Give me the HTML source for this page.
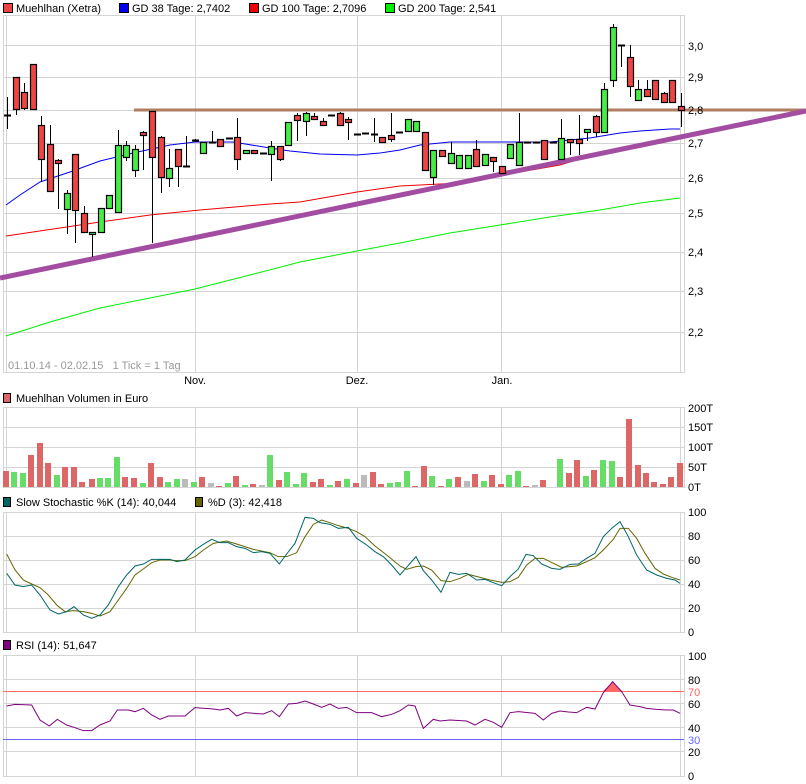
<!DOCTYPE html>
<html><head><meta charset="utf-8">
<style>
html,body{margin:0;padding:0;background:#fff;}
svg{display:block;font-family:"Liberation Sans",sans-serif;font-size:11px;}
</style></head>
<body>
<svg id="s" width="806" height="784" viewBox="0 0 806 784" xmlns="http://www.w3.org/2000/svg">
<g id="grid" stroke="#d4d4d4" stroke-width="1" fill="none"></g>
<g id="vol"></g>
<g id="lines" fill="none"></g>
<g id="candles"></g>
<g id="txt" fill="#000">
<rect x="3.5" y="3.5" width="9" height="9" fill="#ee4444" stroke="#000"/>
<text x="16" y="12">Muehlhan (Xetra)</text>
<rect x="119.5" y="3.5" width="9" height="9" fill="#0000ee" stroke="#000"/>
<text x="132" y="12">GD 38 Tage: 2,7402</text>
<rect x="249.5" y="3.5" width="9" height="9" fill="#ee0000" stroke="#000"/>
<text x="262" y="12">GD 100 Tage: 2,7096</text>
<rect x="385.5" y="3.5" width="9" height="9" fill="#00ee00" stroke="#000"/>
<text x="398" y="12">GD 200 Tage: 2,541</text>
<text x="8" y="369" fill="#999">01.10.14 - 02.02.15&#160;&#160; 1 Tick = 1 Tag</text>
<text x="195" y="384" text-anchor="middle">Nov.</text>
<text x="357" y="384" text-anchor="middle">Dez.</text>
<text x="502" y="384" text-anchor="middle">Jan.</text>
<rect x="3.5" y="393.5" width="7" height="9" fill="#dd6666" stroke="#000"/>
<text x="16" y="402">Muehlhan Volumen in Euro</text>
<rect x="3.5" y="497.5" width="7" height="9" fill="#006666" stroke="#000"/>
<text x="16" y="506">Slow Stochastic %K (14): 40,044</text>
<rect x="195.5" y="497.5" width="7" height="9" fill="#666600" stroke="#000"/>
<text x="208" y="506">%D (3): 42,418</text>
<rect x="3.5" y="640.5" width="7" height="9" fill="#800080" stroke="#000"/>
<text x="16" y="649">RSI (14): 51,647</text>
</g>
<g id="ylab" fill="#000"></g>
</svg>
<script>
var NS="http://www.w3.org/2000/svg";
function el(p,t,a){var e=document.createElementNS(NS,t);for(var k in a)e.setAttribute(k,a[k]);document.getElementById(p).appendChild(e);return e;}
function ln(p,x1,y1,x2,y2,c,w){el(p,"line",{x1:x1,y1:y1,x2:x2,y2:y2,stroke:c,"stroke-width":w||1});}
function txt(x,y,s,c){var e=el("ylab","text",{x:x,y:y});e.textContent=s;if(c)e.setAttribute("fill",c);}
var panels=[[15,372,[45,77,110,143,178,213,252,291,332]],[407,487,[427,447,467]],[512,632,[536,560,584,608]],[655,776,[679,703,727,751]]];
panels.forEach(function(p){
 el("grid","rect",{x:3.5,y:p[0]+.5,width:681,height:p[1]-p[0]});
 ln("grid",6.5,p[0],6.5,p[1],"#d4d4d4");ln("grid",680.5,p[0],680.5,p[1],"#d4d4d4");
 [195,357,501].forEach(function(x){ln("grid",x+.5,p[0],x+.5,p[1],"#d4d4d4");});
 p[2].forEach(function(y){ln("grid",3,y+.5,684,y+.5,"#d4d4d4");});
});
[["3,0",46],["2,9",77],["2,8",110],["2,7",143],["2,6",178],["2,5",213],["2,4",252],["2,3",291],["2,2",332],
 ["200T",408],["150T",427],["100T",447],["50T",467],["0T",487],
 ["100",512],["80",536],["60",560],["40",584],["20",608],["0",632],
 ["100",656],["80",680],["60",704],["40",728],["20",752],["0",776]].forEach(function(a){txt(688,a[1]+4,a[0]);});
txt(688,696,"70","#ff6666");txt(688,744,"30","#6666ff");
var V=[[11,'r',423],[28,'g',426],[44,'g',429],[60,'r',375],[77,'r',339],[94,'r',399],[110,'g',435],[127,'r',411],[143,'r',411],[160,'r',456],[178,'r',447],[194,'g',444],[211,'g',444],[227,'g',381],[244,'r',441],[261,'r',444],[278,'g',459],[294,'r',399],[311,'r',441],[327,'g',456],[344,'g',447],[360,'n',447],[377,'g',456],[393,'r',441],[410,'n',459],[426,'r',468],[443,'g',459],[459,'r',438],[476,'g',465],[492,'r',462],[509,'n',465],[526,'g',375],[542,'r',450],[559,'g',426],[575,'g',462],[592,'g',429],[609,'r',456],[625,'r',447],[642,'g',465],[658,'r',453],[675,'g',447],[692,'r',459],[708,'n',435],[725,'r',426],[741,'r',462],[758,'g',459],[775,'g',456],[791,'g',423],[808,'r',468],[824,'r',408],[841,'g',438],[858,'r',468],[874,'g',447],[891,'r',441],[908,'n',453],[924,'r',432],[941,'g',453],[957,'r',435],[974,'r',462],[990,'g',435],[1007,'g',423],[1024,'r',468],[1040,'n',465],[1057,'r',450],[1090,'g',387],[1107,'r',429],[1123,'r',390],[1140,'g',438],[1156,'r',420],[1173,'g',390],[1190,'g',393],[1206,'r',441],[1223,'r',267],[1240,'r',405],[1256,'r',429],[1273,'r',456],[1290,'r',462],[1306,'r',441],[1323,'r',399]];
var vc={r:"#dd6666",g:"#66dd66",n:"#bbbbbb"};
V.forEach(function(v){var x=Math.round(v[0]/1.945),y=Math.round(330+v[2]/3);el("vol","rect",{x:x-3,y:y,width:6,height:487-y,fill:vc[v[1]]});});
function poly(pts,c,w){el("lines","polyline",{points:pts.map(function(p){return p[0]+","+p[1];}).join(" "),stroke:c,"stroke-width":w});}
poly([[6,336],[50,322],[100,308],[150,298],[195,289],[250,275],[300,262],[357,251],[400,243],[450,233],[500,225],[550,217],[600,210],[640,203],[680,198]],"#00ee00",1);
poly([[6,236],[60,228],[100,222],[150,215],[200,210],[270,204],[300,202],[357,192],[400,186],[460,183],[490,178],[520,172],[560,165],[590,156],[610,151]],"#ee0000",1);
poly([[6,205],[20,195],[40,182],[70,172],[100,161],[133,153],[170,145],[195,142],[233,142],[270,148],[290,151],[320,154],[357,155],[380,153],[400,150],[420,145],[450,142],[500,142],[550,142],[590,138],[620,133],[640,131],[670,129],[680,129]],"#0000ee",1);
var C=[['d',115,115,97,129],['r',77,109,77,115],['r',92,108,83,110],['r',64,109,64,109],['r',125,159,116,182],['r',144,191,125,191],['r',160,163,159,209],['g',193,209,190,234],['r',154,210,154,243],['r',213,232,206,232],['g',232,234,232,257],['g',208,232,208,232],['g',195,208,195,208],['g',145,212,130,212],['g',145,157,141,161],['g',149,170,145,177],['r',132,135,131,170],['r',111,157,111,243],['r',137,177,136,193],['g',168,178,149,187],['r',149,166,149,187],['d',166,166,136,166],['d',140,140,139,142],['g',142,153,142,153],['d',142,142,131,143],['r',139,146,139,146],['d',138,138,138,138],['r',137,159,118,170],['g',150,153,150,154],['r',150,153,150,153],['d',153,153,153,153],['g',146,154,141,181],['r',146,159,146,161],['g',122,145,122,145],['r',115,120,113,141],['g',113,121,112,136],['r',116,119,113,120],['r',121,125,118,125],['d',115,115,115,115],['r',113,125,112,125],['r',119,122,117,140],['d',134,134,134,134],['d',133,133,133,133],['d',134,134,118,142],['r',137,142,137,142],['r',135,139,113,142],['d',132,132,132,132],['g',119,131,119,131],['g',121,131,121,131],['r',132,170,132,170],['g',150,177,150,185],['r',150,156,150,156],['g',153,163,142,163],['g',155,168,155,168],['g',155,168,155,168],['r',149,166,140,166],['g',154,165,154,165],['r',157,161,157,172],['r',166,173,166,173],['g',144,158,144,158],['g',142,165,113,165],['d',142,142,142,142],['d',142,142,142,142],['r',140,159,140,159],['d',142,142,142,142],['g',138,159,119,159],['r',139,142,139,155],['r',139,143,115,155],['g',129,132,129,141],['r',116,132,115,137],['g',89,132,83,132],['g',27,80,24,87],['d',45,45,45,67],['r',57,86,45,97],['g',89,100,80,100],['r',89,96,80,96],['r',80,99,80,99],['r',93,102,92,102],['r',80,102,80,102],['r',106,110,93,127]];
var cc={r:"#ee4444",g:"#44ee44"};
C.forEach(function(c,i){var x=Math.round(7+i*8.53);
 if(c[3]<c[1]||c[4]>c[2])ln("candles",x+.5,c[3],x+.5,c[4],"#000");
 if(c[0]=='d'){ln("candles",x-3,c[1]+.5,x+4,c[1]+.5,"#000",2);}
 else el("candles","rect",{x:x-2.5,y:c[1]+.5,width:6,height:Math.max(2,c[2]-c[1]),fill:cc[c[0]],stroke:"#000","stroke-width":1.2});
});
ln("lines",134,110,806,110,"#b07d62",3);
ln("lines",0,278,806,111,"#a24ca2",5);
function zp(a,b,off){return a.map(function(p){return [off+p[0]/3,490+p[1]/3];});}
var K=zp([[20,250],[45,285],[70,290],[95,285],[120,315],[150,360],[175,372],[200,365],[222,350],[250,375],[275,385],[300,375],[325,345],[355,290],[380,255],[405,228],[430,222],[455,208],[510,208],[530,215],[555,210],[585,180],[610,163],[635,148],[660,158],[685,158],[710,170],[735,175],[760,188],[785,185],[810,190],[838,222],[860,192],[885,160],[915,82],[940,85],[960,98],[990,103],[1015,115],[1045,112],[1070,145],[1100,165],[1125,185],[1150,200],[1175,225],[1200,255]],0,0).concat(zp([[20,232],[48,200],[70,242],[95,270],[123,307],[150,247],[175,253],[200,250],[230,270],[255,268],[280,278],[305,287],[330,260],[355,237],[378,193],[400,197],[425,222],[455,235],[480,238],[510,223],[535,222],[560,205],[585,190],[610,140],[635,115],[660,95],[685,140],[710,195],[740,240],[770,255],[800,265],[825,270],[840,280]],0,400));
var D=zp([[20,192],[45,240],[70,270],[95,282],[120,293],[145,315],[170,345],[195,365],[220,362],[250,365],[275,370],[300,378],[330,365],[355,330],[380,295],[405,255],[430,237],[455,218],[480,210],[510,210],[530,212],[555,212],[585,200],[610,180],[640,160],[680,153],[710,162],[760,178],[810,188],[835,200],[860,200],[890,188],[915,140],[940,103],[965,90],[990,98],[1015,107],[1045,115],[1070,125],[1095,140],[1125,168],[1160,195],[1200,228]],0,0).concat(zp([[20,238],[48,230],[70,228],[95,240],[123,272],[150,275],[180,265],[205,253],[240,262],[270,270],[305,277],[330,275],[355,262],[380,225],[405,205],[430,205],[460,220],[485,232],[530,228],[560,215],[585,203],[610,180],[640,148],[660,115],[685,115],[710,145],[735,190],[765,235],[790,252],[815,262],[840,270]],0,400));
poly(D,"#666600",1);poly(K,"#006666",1);
ln("lines",3,691.5,684,691.5,"#ff6666",1);
ln("lines",3,739.5,684,739.5,"#6666ff",1);
el("lines","polygon",{points:"603,691 613,682 622,691",fill:"#ff6666"});
var R=zp([[20,648],[45,643],[95,645],[120,690],[148,708],[172,688],[200,705],[225,713],[250,722],[275,722],[300,705],[330,693],[352,660],[385,660],[405,665],[430,655],[455,675],[480,688],[505,678],[555,678],[585,653],[640,657],[660,660],[685,655],[710,678],[735,668],[790,672],[815,662],[838,680],[865,642],[890,640],[915,633],[940,642],[965,652],[990,642],[1015,655],[1040,652],[1070,668],[1115,668],[1145,680],[1175,673],[1200,662]],0,0).concat(zp([[25,645],[45,648],[70,715],[100,688],[120,693],[150,690],[200,693],[225,705],[255,688],[280,697],[305,712],[330,668],[355,665],[405,670],[430,690],[455,670],[480,663],[505,666],[530,668],[560,652],[585,657],[610,608],[638,575],[665,605],[690,645],[720,650],[740,655],[770,658],[800,660],[820,660],[840,670]],0,400));
poly(R,"#800080",1);
</script>
</body></html>
